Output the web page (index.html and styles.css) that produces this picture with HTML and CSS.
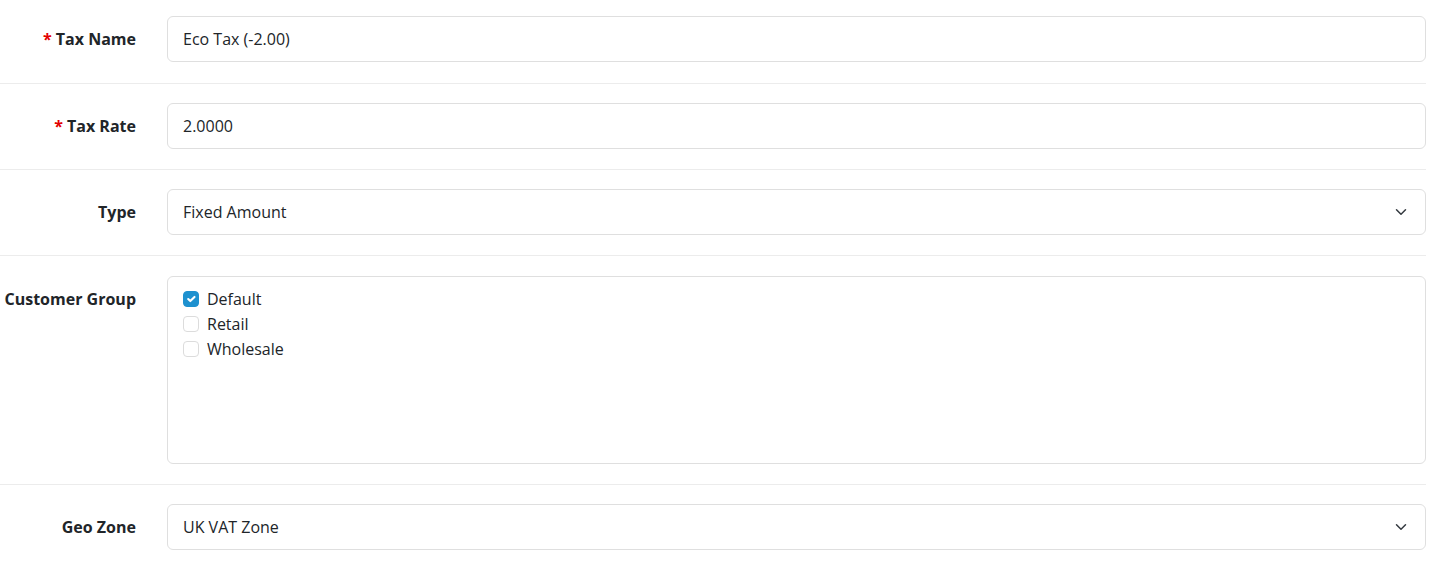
FILE: index.html
```html
<!DOCTYPE html>
<html lang="en">
<head>
<meta charset="utf-8">
<title>Tax Rate</title>
<link rel="stylesheet" href="styles.css">
</head>
<body>
<form class="form">
  <div class="row first">
    <label class="label required">Tax Name</label>
    <div class="field"><input class="control" type="text" value="Eco Tax (-2.00)"></div>
  </div>
  <div class="row">
    <label class="label required">Tax Rate</label>
    <div class="field"><input class="control" type="text" value="2.0000"></div>
  </div>
  <div class="row">
    <label class="label">Type</label>
    <div class="field">
      <div class="control select">
        <span>Fixed Amount</span>
        <svg class="chev" width="16" height="12" viewBox="0 0 16 16"><path d="M2 5l6 6 6-6" fill="none" stroke="#343a40" stroke-width="2" stroke-linecap="round" stroke-linejoin="round"/></svg>
      </div>
    </div>
  </div>
  <div class="row top">
    <label class="label">Customer Group</label>
    <div class="field">
      <div class="box">
        <div class="check"><span class="cb checked"><svg width="16" height="16" viewBox="0 0 20 20"><path d="M6 10l3 3 6-6" fill="none" stroke="#fff" stroke-width="3" stroke-linecap="round" stroke-linejoin="round"/></svg></span><span>Default</span></div>
        <div class="check"><span class="cb"></span><span>Retail</span></div>
        <div class="check"><span class="cb"></span><span>Wholesale</span></div>
      </div>
    </div>
  </div>
  <div class="row">
    <label class="label">Geo Zone</label>
    <div class="field">
      <div class="control select">
        <span>UK VAT Zone</span>
        <svg class="chev" width="16" height="12" viewBox="0 0 16 16"><path d="M2 5l6 6 6-6" fill="none" stroke="#343a40" stroke-width="2" stroke-linecap="round" stroke-linejoin="round"/></svg>
      </div>
    </div>
  </div>
</form>
</body>
</html>
```

FILE: styles.css
```css
html, body {
  margin: 0;
  padding: 0;
  background: #fff;
}
body {
  font-family: "Open Sans", "Liberation Sans", sans-serif;
  font-size: 16px;
  color: #212529;
}
.form {
  padding: 0 20px 0 0;
}
.row {
  display: grid;
  grid-template-columns: 136px 1fr;
  column-gap: 31px;
  align-items: center;
  padding: 19px 0 20px;
  border-top: 1px solid #ececec;
}
.row.first {
  border-top: none;
  padding-top: 16px;
  padding-bottom: 21px;
}
.row.top {
  align-items: start;
  padding-top: 20px;
}
.label {
  text-align: right;
  font-weight: 700;
  line-height: 22px;
  white-space: nowrap;
}
.row.top .label {
  padding-top: 12px;
}
.required::before {
  content: "* ";
  color: #e30000;
}
.control {
  box-sizing: border-box;
  display: flex;
  align-items: center;
  width: 100%;
  height: 46px;
  padding: 0 15px;
  border: 1px solid #dfdfdf;
  border-radius: 6px;
  background: #fff;
  font: inherit;
  color: #212529;
  line-height: 22px;
  outline: none;
}
.select {
  justify-content: space-between;
}
.chev {
  margin-right: 1px;
}
.box {
  box-sizing: border-box;
  height: 188px;
  border: 1px solid #dfdfdf;
  border-radius: 6px;
  padding: 9px 15px;
}
.check {
  display: flex;
  align-items: center;
  gap: 8px;
  height: 25px;
  line-height: 22px;
}
.cb {
  box-sizing: border-box;
  width: 16px;
  height: 16px;
  border: 1px solid #dcdcdc;
  border-radius: 4px;
  background: #fff;
  display: flex;
  align-items: center;
  justify-content: center;
}
.cb.checked {
  background: #1e91cf;
  border-color: #1e91cf;
}
```
